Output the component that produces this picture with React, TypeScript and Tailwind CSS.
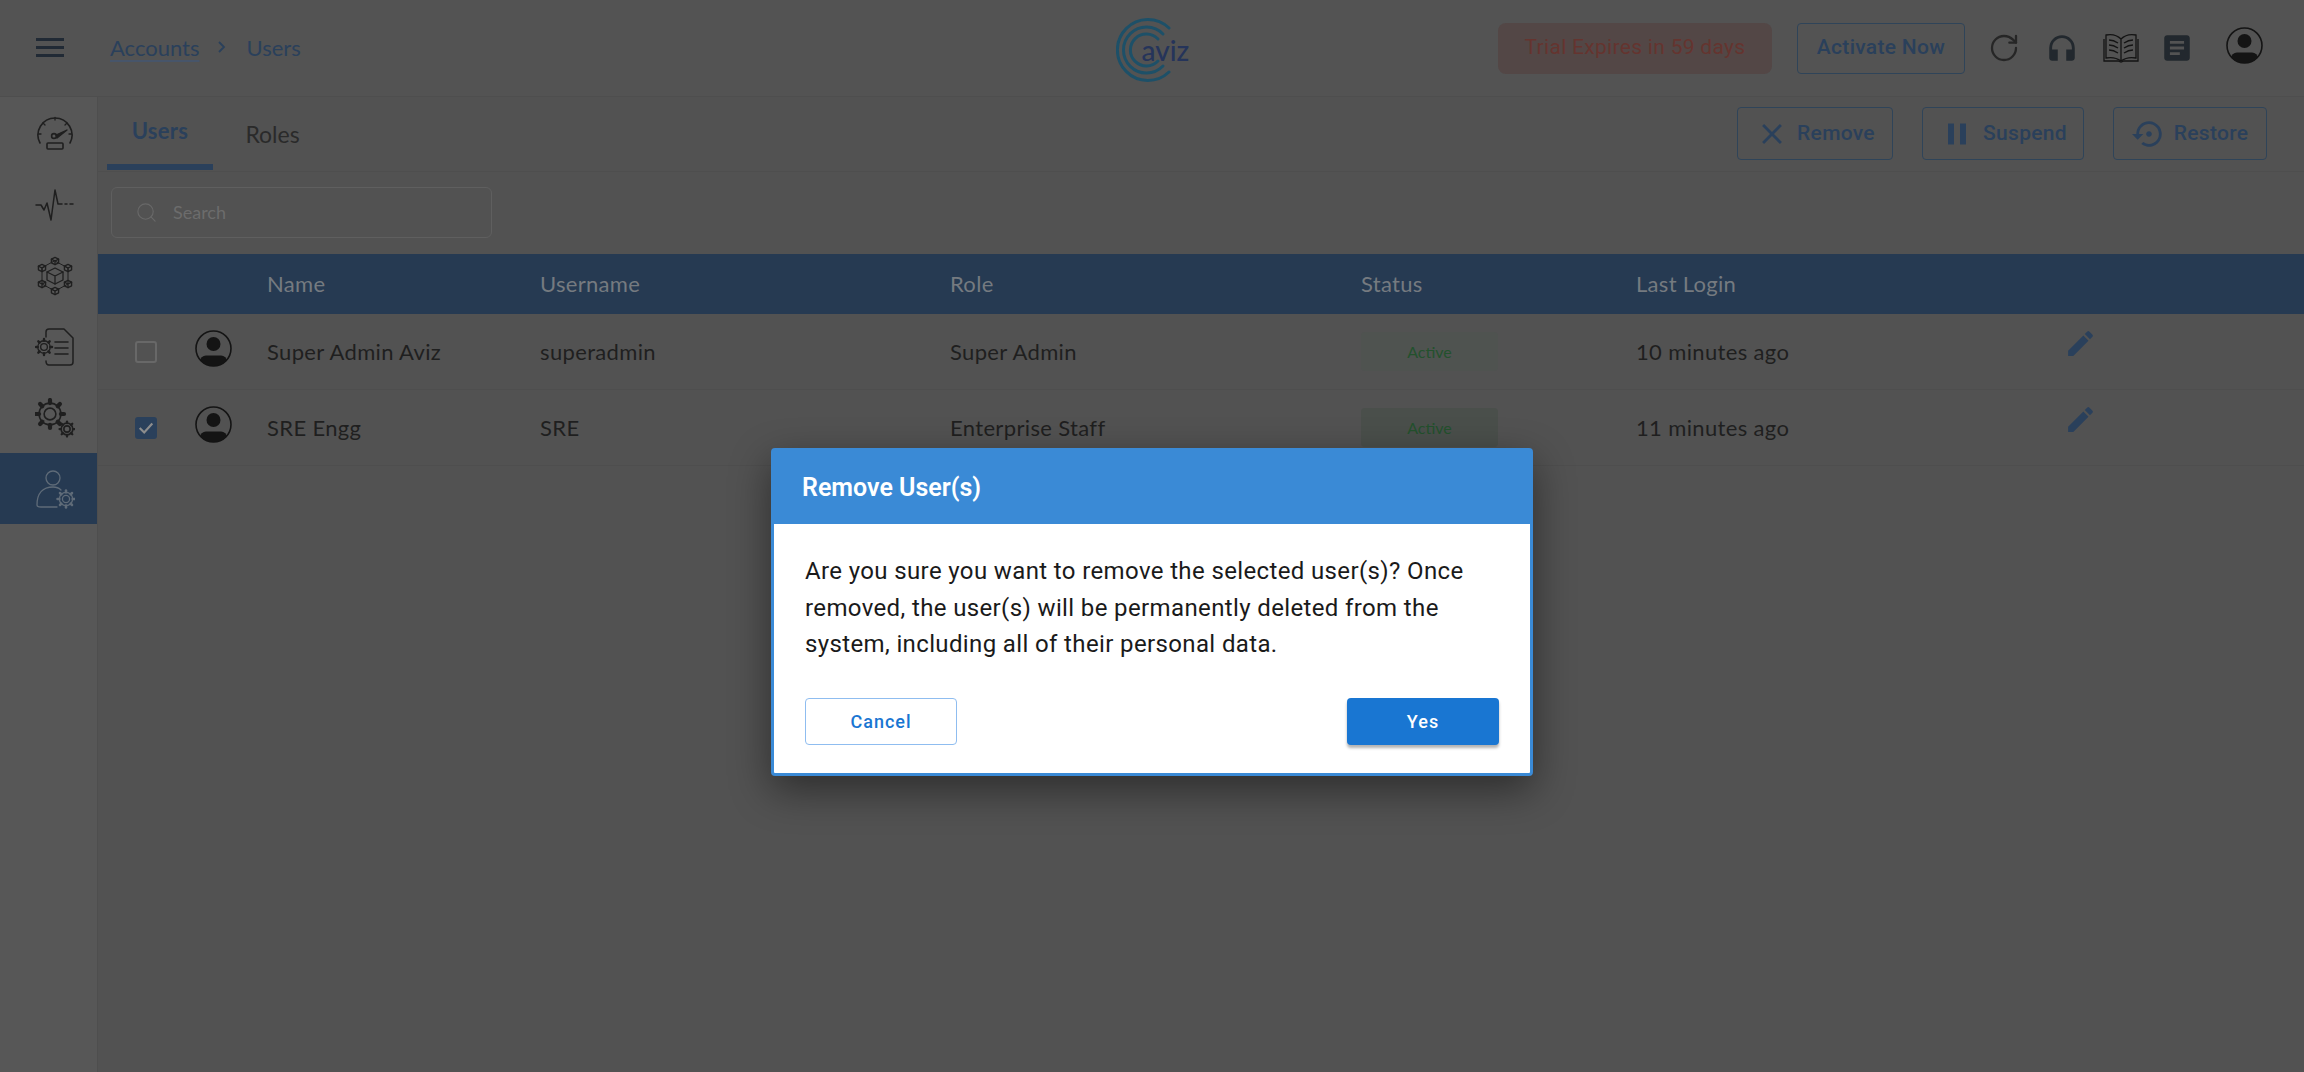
import React from "react";
import { MdHeadphones, MdArticle, MdEdit, MdClose, MdPause, MdSettingsBackupRestore } from "react-icons/md";
import { Search, RotateCw } from "lucide-react";

const Avatar = ({ className = "" }: { className?: string }) => (
  <svg viewBox="0 0 37 37" className={className}>
    <defs>
      <clipPath id="avclip"><circle cx="18.5" cy="18.5" r="17.5" /></clipPath>
    </defs>
    <circle cx="18.5" cy="18.5" r="17.5" fill="none" stroke="#141414" strokeWidth="1.6" />
    <circle cx="18.5" cy="14" r="7" fill="#141414" />
    <g clipPath="url(#avclip)"><rect x="5" y="25.5" width="27" height="12" rx="6" fill="#141414" /></g>
  </svg>
);

const Logo = () => (
  <div className="relative w-[73px] h-[66px] mt-[4px]">
    <svg viewBox="0 0 66 66" className="absolute left-0 top-0 w-[66px] h-[66px]" fill="none" stroke="#1d5068" strokeWidth="3" strokeLinecap="round">
      <path d="M53 11 A30.5 30.5 0 1 0 53 55" />
      <path d="M47 17 A23 23 0 1 0 47 49" />
      <path d="M42 22 A16 16 0 1 0 42 44" />
    </svg>
    <span className="absolute left-[26px] top-[15px] text-[28px] leading-[36px] font-['Lato',sans-serif] text-[#25345a] font-medium">aviz</span>
  </div>
);

const SideIcon = ({ children, active = false }: { children: React.ReactNode; active?: boolean }) => (
  <div className={`h-[71px] w-[97px] pl-[13px] flex items-center justify-center ${active ? "bg-[#263a52]" : ""}`}>
    <svg viewBox="0 0 40 40" className="w-[40px] h-[40px]" fill="none" stroke={active ? "#5f6b78" : "#1f1f1f"} strokeWidth="1.3" strokeLinecap="round" strokeLinejoin="round">
      {children}
    </svg>
  </div>
);

const Gear = ({ cx, cy, r }: { cx: number; cy: number; r: number }) => {
  const teeth = Array.from({ length: 8 }, (_, i) => (i * Math.PI) / 4);
  return (
    <g>
      <circle cx={cx} cy={cy} r={r * 0.42} />
      <circle cx={cx} cy={cy} r={r * 0.78} />
      {teeth.map((t, i) => (
        <line key={i} x1={cx + Math.cos(t) * r * 0.78} y1={cy + Math.sin(t) * r * 0.78} x2={cx + Math.cos(t) * r} y2={cy + Math.sin(t) * r} strokeWidth={r * 0.3} />
      ))}
    </g>
  );
};

const Cube = ({ cx, cy, r }: { cx: number; cy: number; r: number }) => (
  <g>
    <path d={`M${cx} ${cy - r} L${cx + r} ${cy - r / 2} V${cy + r / 2} L${cx} ${cy + r} L${cx - r} ${cy + r / 2} V${cy - r / 2} Z`} />
    <path d={`M${cx - r} ${cy - r / 2} L${cx} ${cy} L${cx + r} ${cy - r / 2} M${cx} ${cy} V${cy + r}`} />
  </g>
);

const Sidebar = () => (
  <aside className="w-[98px] shrink-0 bg-[#575757] border-r border-[#4e4e4e] pt-[1px] flex flex-col">
    <SideIcon>
      <path d="M5 29 A17 17 0 1 1 35 29" strokeWidth="1.6" />
      <path d="M20 3.5 V6 M8 9 L10 11 M32 9 L30 11 M3.5 20 H6 M36.5 20 H34" />
      <circle cx="19" cy="22" r="2.4" strokeWidth="1.6" />
      <path d="M21 21 L32 16 L22 24 Z" fill="#1f1f1f" />
      <rect x="12" y="29" width="16" height="6" rx="1" strokeWidth="1.6" />
    </SideIcon>
    <SideIcon>
      <path d="M1 20 H6 L9 25 L12 18 L16 35 L20 5 L23 19 H27 M30 19 H32 M35 19 H38" strokeWidth="1.5" />
    </SideIcon>
    <SideIcon>
      <path d="M20 5 L33 12 V28 L20 35 L7 28 V12 Z" strokeWidth="1" />
      <Cube cx={20} cy={20} r={8} />
      <Cube cx={20} cy={5} r={3.6} />
      <Cube cx={20} cy={35} r={3.6} />
      <Cube cx={7} cy={12} r={3.6} />
      <Cube cx={33} cy={12} r={3.6} />
      <Cube cx={7} cy={28} r={3.6} />
      <Cube cx={33} cy={28} r={3.6} />
    </SideIcon>
    <SideIcon>
      <path d="M11 10 V5 Q11 2 14 2 H29 L38 11 V35 Q38 38 35 38 H14 Q11 38 11 34" strokeWidth="1.5" />
      <Gear cx={9} cy={20} r={8} />
      <path d="M20 15 H33 M20 21 H33 M20 27 H33" strokeWidth="1.6" />
    </SideIcon>
    <SideIcon>
      <g strokeWidth="1.6">
        <Gear cx={15} cy={16} r={14} />
        <Gear cx={32} cy={31} r={7.5} />
      </g>
    </SideIcon>
    <SideIcon active>
      <circle cx="18" cy="9" r="7" />
      <path d="M2 36 C2 24 8 18 18 18 C21 18 24 19 26 21 M2 36 Q2 38 6 38 H22" />
      <Gear cx={31} cy={30} r={8.5} />
    </SideIcon>
  </aside>
);

const OutlineBtn = ({ icon, label, className = "" }: { icon: React.ReactNode; label: string; className?: string }) => (
  <div className={`h-[53px] rounded-[4px] border border-[#2f4459] flex items-center justify-center gap-[8px] text-[21px] font-medium tracking-[0.3px] text-[#2a405b] ${className}`}>
    {icon}
    <span>{label}</span>
  </div>
);

const users = [
  { name: "Super Admin Aviz", username: "superadmin", role: "Super Admin", login: "10 minutes ago", checked: false, chip: "bg-[#4f5350]" },
  { name: "SRE Engg", username: "SRE", role: "Enterprise Staff", login: "11 minutes ago", checked: true, chip: "bg-[#4a4f4b]" },
];

const cols = "grid grid-cols-[97px_72px_273px_410px_411px_275px_431px_1fr]";

export default function App() {
  return (
    <div className="relative w-[2304px] h-[1072px] overflow-hidden bg-[#525252] flex flex-col font-['Roboto',sans-serif]">
      <header className="h-[97px] shrink-0 flex items-center bg-[#535353] border-b border-[#4e4e4e]">
        <div className="flex-1 flex items-center text-[22px] font-['Lato',sans-serif] text-[#2a405b] -mt-[2px]">
          <div className="ml-[36px] w-[28px] flex flex-col gap-[5px] mr-[46px] mt-[1px]">
            <div className="h-[3px] bg-[#212a35]" />
            <div className="h-[3px] bg-[#212a35]" />
            <div className="h-[3px] bg-[#212a35]" />
          </div>
          <span className="underline underline-offset-[4px] decoration-[#47556a]">Accounts</span>
          <svg viewBox="0 0 10 14" className="w-[10px] h-[14px] ml-[18px] mr-[19px]" fill="none" stroke="#2a405b" strokeWidth="1.8"><path d="M2 2 L7 7 L2 12" /></svg>
          <span>Users</span>
        </div>
        <Logo />
        <div className="flex-1 flex items-center justify-end">
          <div className="w-[274px] h-[51px] rounded-[8px] bg-[#534746] text-[#65342f] text-[21px] tracking-[0.3px] flex items-center justify-center">Trial Expires in 59 days</div>
          <div className="w-[168px] h-[51px] ml-[25px] rounded-[4px] border border-[#2f4459] text-[#2a405b] text-[21px] font-medium tracking-[0.3px] flex items-center justify-center">Activate Now</div>
          <RotateCw className="w-[32px] h-[32px] ml-[23px] text-[#262626]" strokeWidth={1.7} />
          <MdHeadphones className="w-[34px] h-[34px] ml-[25px] text-[#22282e]" />
          <svg viewBox="0 0 36 30" className="w-[38px] h-[30px] ml-[23px]" fill="none" stroke="#141414" strokeWidth="1.3">
            <path d="M18 6 C14 2 8 1 3 2 V25 C8 24 14 25 18 28 C22 25 28 24 33 25 V2 C28 1 22 2 18 6 Z M18 6 V28" />
            <path d="M1 6 V28 H15 L18 29 L21 28 H35 V6" />
            <path d="M6 7 C9 7 12 8 15 10 M6 12 C9 12 12 13 15 15 M6 17 C9 17 12 18 15 20 M30 7 C27 7 24 8 21 10 M30 12 C27 12 24 13 21 15 M30 17 C27 17 24 18 21 20" />
          </svg>
          <MdArticle className="w-[34px] h-[34px] ml-[20px] text-[#22282e]" />
          <Avatar className="w-[37px] h-[37px] ml-[32px] mr-[41px] -mt-[6px]" />
        </div>
      </header>
      <div className="flex flex-1 min-h-0">
        <Sidebar />
        <main className="flex-1 min-w-0">
          <div className="h-[75px] flex items-start justify-between border-b border-[#4e4e4e] pr-[37px]">
            <div className="flex ml-[9px] font-['Lato',sans-serif]">
              <div className="w-[106px] h-[73px] border-b-[6px] border-[#2a405b] flex justify-center pt-[17px] text-[22px] tracking-[0.3px] text-[#2a405b] font-bold">Users</div>
              <div className="w-[106px] flex justify-center pt-[20px] pl-[13px] text-[23px] text-[#2a2a2a]">Roles</div>
            </div>
            <div className="flex gap-[29px] pt-[10px]">
              <OutlineBtn className="w-[156px]" label="Remove" icon={<MdClose className="w-[34px] h-[34px]" />} />
              <OutlineBtn className="w-[162px] gap-[6px]" label="Suspend" icon={<MdPause className="w-[36px] h-[36px]" />} />
              <OutlineBtn className="w-[154px]" label="Restore" icon={<MdSettingsBackupRestore className="w-[34px] h-[34px]" />} />
            </div>
          </div>
          <div className="ml-[13px] mt-[15px] mb-[16px] w-[381px] h-[51px] rounded-[6px] border border-[#5f5f5f] flex items-center pl-[23px] gap-[15px] text-[18px] font-['Lato',sans-serif] text-[#6c6c6c]">
            <Search className="w-[23px] h-[23px] text-[#686868]" strokeWidth={1.2} />
            <span>Search</span>
          </div>
          <div className={`${cols} h-[60px] pb-[1px] items-center bg-[#263a52] text-[22px] tracking-[0.3px] font-['Lato',sans-serif] text-[#757a80]`}>
            <div /><div />
            <div>Name</div><div>Username</div><div>Role</div><div>Status</div><div>Last Login</div><div />
          </div>
          {users.map((u) => (
            <div key={u.name} className={`${cols} h-[76px] items-center border-b border-[#4e4e4e] text-[22px] tracking-[0.35px] font-['Lato',sans-serif] text-[#1f1f1f]`}>
              <div className="pl-[37px]">
                {u.checked ? (
                  <div className="w-[22px] h-[22px] rounded-[3px] bg-[#2a405b] flex items-center justify-center">
                    <svg viewBox="0 0 20 20" className="w-[18px] h-[18px]" fill="none" stroke="#8d8d8d" strokeWidth="2.4"><path d="M3 10 L8 15 L17 5" /></svg>
                  </div>
                ) : (
                  <div className="w-[22px] h-[22px] rounded-[3px] border-[2px] border-[#686868]" />
                )}
              </div>
              <Avatar className="w-[37px] h-[37px] self-start mt-[16px]" />
              <div>{u.name}</div>
              <div>{u.username}</div>
              <div>{u.role}</div>
              <div>
                <div className={`w-[137px] h-[39px] rounded-[4px] ${u.chip} flex items-center justify-center text-[16px] tracking-normal text-[#23512d]`}>Active</div>
              </div>
              <div>{u.login}</div>
              <MdEdit className="w-[33px] h-[33px] self-start mt-[13px] -ml-[3px] text-[#2a405b]" />
            </div>
          ))}
        </main>
      </div>

      <div role="dialog" className="absolute left-[771px] top-[448px] w-[762px] rounded-[4px] border-[3px] border-[#3a8ad6] bg-white shadow-[0_14px_40px_rgba(0,0,0,0.45)]">
        <div className="h-[73px] bg-[#3a8ad6] flex items-center pl-[28px] text-[25px] font-semibold text-white">Remove User(s)</div>
        <p className="px-[31px] pt-[29px] text-[24px] leading-[36.6px] tracking-[0.37px] text-[#1a1a1a]">
          Are you sure you want to remove the selected user(s)? Once removed, the user(s) will be permanently deleted from the system, including all of their personal data.
        </p>
        <div className="flex justify-between px-[31px] pt-[35px] pb-[28px]">
          <div className="w-[152px] h-[47px] rounded-[4px] border border-[#8fbdf0] text-[#1976d2] text-[18px] font-medium tracking-[1px] flex items-center justify-center">Cancel</div>
          <div className="w-[152px] h-[47px] rounded-[4px] bg-[#1976d2] text-white text-[18px] font-medium tracking-[1px] flex items-center justify-center shadow-[0_3px_3px_rgba(0,0,0,0.3)]">Yes</div>
        </div>
      </div>
    </div>
  );
}
